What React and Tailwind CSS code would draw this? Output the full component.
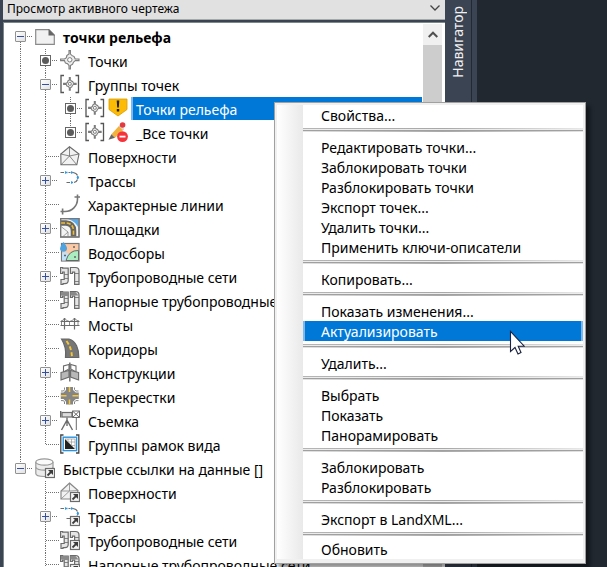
import React from "react";

const G = "#6b6b6b";

function Svg({ children }) {
  return (
    <svg viewBox="0 0 20 21" className="h-[21px] w-5 shrink-0" fill="none" stroke={G} strokeWidth="1.2" aria-hidden="true">
      {children}
    </svg>
  );
}

const Shortcut = () => (
  <g>
    <rect x="10.5" y="10.5" width="9" height="9" fill="#f4f4f4" stroke="#6b6b6b" />
    <path d="M12.5 17.5 L16.5 13.5" stroke="#3c3c3c" strokeWidth="1.8" />
    <path d="M13 12 H18 V17 Z" fill="#3c3c3c" stroke="none" />
  </g>
);

const Pipes = ({ dark }) => (
  <g>
    <path d="M.6 1.5 H2.6 V2.2 H8.2 V14.5 Q8.2 17.6 5 17.6 H3 V18.5 H1 V13.5 H4.2 V6 H2.6 V7.5 H.6 Z" fill="#e6e6e6" />
    <path d="M10.4 1.5 H15.5 Q19 1.5 19 5 V18.4 H14.6 V6.2 H12.4 V7.5 H10.4 Z" fill="#e6e6e6" />
    {dark && <path d="M1 2 H8 V6 H4 V5.5 H1 Z M10.4 2 H15.5 L18.5 5.5 H10.4 Z" fill="#8a8a8a" stroke="none" />}
    <path d="M4.2 8.5 H8.2 M4.2 12.5 H8.2 M14.6 7.5 H19 M14.6 15.5 H19" strokeWidth=".8" />
  </g>
);

const Surface = () => (
  <g strokeWidth="1.1">
    <path d="M9.5 .8 L19 8 L16.8 18.8 H1 L.8 8 Z" fill="#f2f2f2" />
    <path d="M9.5 .8 V10 L19 8 M9.5 10 L16.8 18.8 M9.5 10 L1 18.8 M9.5 10 L.8 8" strokeWidth=".8" />
  </g>
);

const Alignment = () => (
  <g strokeWidth="1.2">
    <path d="M.5 2.5 H4 M8.5 2.5 H10.5 M13 2.5 C15.5 3 17 4 17.5 5.5 M17.5 9.5 C17 11 16 12 14 12.5 M6.5 12.5 H10" />
    <path d="M5 2.5 H7.5 M11 2.5 H13 M17.8 6 V9 M11 12.5 H13" stroke="#2b9be6" strokeWidth="1.6" />
    <path d="M5.5 1.2 V3.8 M11.5 1.2 V3.8 M16.6 7.5 H19 M11.5 11.2 V13.8" stroke="#2b9be6" strokeWidth=".8" />
  </g>
);

const Point = ({ s }) => (
  <g transform={s ? "translate(3.2 3.2) scale(.68)" : undefined}>
    <path
      d="M9 .6 H10.4 V4 Q12 6 14 6.5 L15.2 9 H19 V10.6 H15.2 Q13 12 12.6 14.2 L10.4 15.5 V19 H9 V15.5 Q8 13.2 5.4 13 L4.4 10.6 H.6 V9 H4.4 Q7 8 6.8 5.6 L9 4 Z"
      fill="#ededed"
      stroke="#7c7c7c"
      strokeWidth={s ? 1.6 : 1.1}
    />
    <circle cx="9.8" cy="9.8" r="2.2" fill="#fff" stroke="#7c7c7c" strokeWidth={s ? 1.4 : 1} />
  </g>
);

const ICONS = {
  drawing: (
    <g>
      <path d="M.7 3.6 H14 L19.3 9 V18.3 H.7 Z" fill="#f1f1f1" stroke="#8a8a8a" />
      <path d="M13.5 3 L20 9.5 H13.5 Z" fill="#666" stroke="none" />
    </g>
  ),
  point: <Point />,
  group: (
    <g>
      <path d="M4 1.5 H1 V18.5 H4 M15.5 1.5 H18.5 V18.5 H15.5" stroke="#555" strokeWidth="1.3" />
      <Point s />
    </g>
  ),
  warn: (
    <g stroke="none">
      <path d="M1 1 H19 V11.5 L10 18 L1 11.5 Z" fill="#fdbb05" stroke="#d99a00" strokeWidth=".8" />
      <path d="M8.7 2.5 H11.3 L10.8 9.5 H9.2 Z M8.8 11 H11.2 V13.4 H8.8 Z" fill="#222" />
    </g>
  ),
  pencil: (
    <g stroke="none">
      <path d="M11.4 3.4 L15.8 7.6 L7 15.8 L3.4 12.2 Z" fill="#f2b23e" />
      <path d="M12.6 2.6 L16.2 6.2 L14.8 8 L11 4.4 Z" fill="#d8d8d8" />
      <circle cx="14.6" cy="3" r="2.8" fill="#e53940" />
      <path d="M3.4 12.2 L7 15.8 L.5 17.8 Z" fill="#666" />
      <circle cx="14.5" cy="14.6" r="5.4" fill="#f5333b" />
      <rect x="11.5" y="13.7" width="6" height="1.8" fill="#fff" />
    </g>
  ),
  surface: <Surface />,
  alignment: <Alignment />,
  feature: (
    <g stroke="#777" strokeWidth="1.6">
      <path d="M.5 17.5 H5 C12 17.5 17.5 12 17.5 5 V.5" />
      <path d="M2.6 14.5 V20.5 M14.5 3 H20" />
    </g>
  ),
  site: (
    <g>
      <rect x=".6" y=".6" width="18.4" height="18.4" fill="#f4f4f4" />
      <path d="M8 1 H18.6 V11 Q17 4 8 1 Z" fill="#5aa9e8" stroke="none" />
      <path d="M1 5 H6 Q13.5 5.5 13.5 13 V18.5" stroke="#666" strokeWidth="5.6" />
      <path d="M1 5 H6 Q13.5 5.5 13.5 13 V18.5" stroke="#f5bd2c" strokeWidth="1.6" strokeDasharray="4 1.6" />
      <path d="M1 8.5 L8 14 V18.5 M8 14 L3 18.5" strokeWidth=".8" stroke="#888" />
      <rect x=".6" y=".6" width="18.4" height="18.4" stroke="#777" />
    </g>
  ),
  catchment: (
    <g>
      <rect x="1.5" y="1.5" width="17.5" height="17.5" fill="#fbc9a5" stroke="#777" />
      <path d="M2 11 Q7 9 9 13 V18.5 H2 Z" fill="#bfe1fa" stroke="none" />
      <path d="M6 18.5 Q9 8 18.5 8.5 V18.5 Z" fill="#a9edc1" stroke="#666" strokeWidth="1" />
      <path d="M3.5 0 Q7.5 5 7 7 A3.6 3.6 0 0 1 0 7 Q0 4.5 3.5 0 Z" fill="#4fa3e0" stroke="none" />
      <path d="M13 5 H15 M4 13.5 H6 M14 15 H16" strokeWidth="1.6" stroke="#666" />
    </g>
  ),
  pipes: <Pipes />,
  pressure: <Pipes dark />,
  bridge: (
    <g strokeWidth="1.2">
      <path d="M.5 7.5 H19.5 M.5 11.5 H19.5 M4.5 4 V15.5 M14.5 4 V15.5" />
      <path d="M1 7 Q4 6.5 4.5 4 Q6 7 9.5 7.5 Q13 7 14.5 4 Q15.5 6.5 19 7 M1.5 7 V12 M9.5 7 V12 M18 7 V12" strokeWidth=".8" />
    </g>
  ),
  corridor: (
    <g>
      <path d="M1.5 1 H9 C16 3 19 11 18.8 19.5 H5.5 C6.5 11 4 5 1.5 1 Z" fill="#777" stroke="#666" />
      <path d="M6.5 3 C10 8 11.5 12 12 19" stroke="#f7c632" strokeWidth="1.9" strokeDasharray="4 2.2" />
    </g>
  ),
  assembly: (
    <g strokeWidth="1.1">
      <path d="M3.5 10 V4 L9 2.5 V7 L3.5 10 M16 10 V4 L10.8 2.5 V7 L16 10" fill="#fff" />
      <path d="M1 10.5 L9 8.5 V15 L1 18 Z M18.6 10.5 L10.6 8.5 V15 L18.6 18 Z" fill="#b8b8b8" />
      <path d="M9.8 .5 V19.5" strokeWidth="1.4" />
    </g>
  ),
  intersection: (
    <g>
      <path d="M6 1 H13 V4 L15.8 6.5 H18.8 V13 H15.8 L13 15.8 V18.6 H6 V15.8 L3.5 13 H.8 V6.5 H3.5 L6 4 Z" fill="#858585" stroke="none" />
      <path d="M4.5 1.5 V3.5 L3.5 5 H1 M14.5 1.5 V3.5 L15.8 5 H18.5 M4.5 18 V16 L3.5 14.6 H1 M14.5 18 V16 L15.8 14.6 H18.5" stroke="#777" strokeWidth=".9" />
      <path d="M9.5 1 V6 M9.5 13.5 V18.6 M1 9.8 H6.5 M12.5 9.8 H18.6" stroke="#f9c838" strokeWidth="1.5" />
    </g>
  ),
  survey: (
    <g>
      <rect x="2" y="2.5" width="10" height="4.5" fill="#ddd" />
      <path d="M.7 1 V7.5 M7 7.5 V11 M7 10 L1.5 20 M7 10 L12.5 20 M7 10 V16" strokeWidth="1.4" />
      <path d="M12.5 1 H19.5 V7.5 H12.5 Z M12.5 1 L19.5 7.5 M19.5 1 L12.5 7.5 M16.3 7 V20" strokeWidth="1" fill="#fff" />
    </g>
  ),
  frames: (
    <g>
      <path d="M3.5 1 H.8 V19 H3.5 M16 1 H18.8 V19 H16" stroke="#444" strokeWidth="1.3" />
      <rect x="3.2" y="3.2" width="13.4" height="13.4" stroke="#2b93e0" fill="#fff" strokeWidth="1.4" />
      <path d="M5 5 L15 15 H5 Z" fill="#222" stroke="none" />
      <path d="M8 5 V8 M11.5 5 V11 M8 8 H15 M11.5 11.5 H15 M5 5 H15 V15" strokeWidth=".7" stroke="#999" />
    </g>
  ),
  database: (
    <g>
      <path d="M.8 4 V15.5 C.8 19.5 18 19.5 18 15.5 V4" fill="#ececec" stroke="#999" />
      <ellipse cx="9.4" cy="4" rx="8.6" ry="3.2" fill="#fafafa" stroke="#999" />
      <path d="M.8 9.5 C3 13 16 13 18 9.5" stroke="#999" />
      <Shortcut />
    </g>
  ),
  surfaceLink: (
    <g>
      <path d="M9.5 1 L18 8.5 L16 17 H1 V9 Z" fill="#f2f2f2" stroke="#888" />
      <path d="M9.5 1 V9 L1 9 M9.5 9 L1 17 M9.5 9 L18 8.5" strokeWidth=".8" stroke="#888" />
      <Shortcut />
    </g>
  ),
  alignmentLink: <g><Alignment /><Shortcut /></g>,
  pipesLink: <g><Pipes /><Shortcut /></g>,
  pressureLink: <g><Pipes dark /><Shortcut /></g>,
};

const V = "bg-[repeating-linear-gradient(to_bottom,#707070_0_1px,transparent_1px_2px)]";
const H = "bg-[repeating-linear-gradient(to_right,#707070_0_1px,transparent_1px_2px)]";

function Line({ on }) {
  return <span className={"w-px grow " + (on ? V : "")} />;
}

/* One 25px tree column: a vertical guide with an optional node box and a stub to the right. */
function Cell({ kind, up, down }) {
  return (
    <span className="flex h-6 w-[25px] shrink-0">
      <span className="flex w-[11px] flex-col items-center">
        <span className="flex h-1.5 flex-col"><Line on={up} /></span>
        {kind === "plus" || kind === "minus" || kind === "dot" ? (
          <button
            type="button"
            aria-label={kind === "minus" ? "Свернуть" : "Развернуть"}
            className={
              "flex h-[11px] w-[11px] items-center justify-center border " +
              (kind === "dot" ? "border-[#666] bg-white" : "rounded-[1px] border-[#929292] bg-gradient-to-br from-white to-[#e2e2e2]")
            }
          >
            {kind === "dot" ? (
              <span className="h-[7px] w-[7px] rounded-full bg-[#5c5c5c]" />
            ) : (
              <svg viewBox="0 0 7 7" className="h-[7px] w-[7px]" stroke="#3550a0" aria-hidden="true">
                <path d={kind === "plus" ? "M0 3.5 H7 M3.5 0 V7" : "M0 3.5 H7"} />
              </svg>
            )}
          </button>
        ) : (
          <span className="flex h-[11px] flex-col">
            <span className="flex h-1.5 flex-col"><Line on={up} /></span>
            <span className="flex h-[5px] flex-col"><Line on={down} /></span>
          </span>
        )}
        <span className="flex grow flex-col"><Line on={down} /></span>
      </span>
      {kind !== "none" && (
        <span className={"mt-[11px] h-px " + H + (kind === "leaf" ? " -ml-[5px] w-[13px]" : " ml-px w-[6px]")} />
      )}
    </span>
  );
}

const ROWS = [
  { lv: 0, kind: "minus", icon: "drawing", text: "точки рельефа", bold: true, up: false, down: true },
  { lv: 1, kind: "dot", icon: "point", text: "Точки", up: true, down: true },
  { lv: 1, kind: "minus", icon: "group", text: "Группы точек", up: true, down: true },
  { lv: 2, kind: "dot", icon: "group", icon2: "warn", text: "Точки рельефа", sel: true, up: true, down: true },
  { lv: 2, kind: "dot", icon: "group", icon2: "pencil", text: "_Все точки", up: true, down: false },
  { lv: 1, kind: "leaf", icon: "surface", text: "Поверхности", up: true, down: true },
  { lv: 1, kind: "plus", icon: "alignment", text: "Трассы", up: true, down: true },
  { lv: 1, kind: "leaf", icon: "feature", text: "Характерные линии", up: true, down: true },
  { lv: 1, kind: "plus", icon: "site", text: "Площадки", up: true, down: true },
  { lv: 1, kind: "leaf", icon: "catchment", text: "Водосборы", up: true, down: true },
  { lv: 1, kind: "plus", icon: "pipes", text: "Трубопроводные сети", up: true, down: true },
  { lv: 1, kind: "leaf", icon: "pressure", text: "Напорные трубопроводные сети", up: true, down: true },
  { lv: 1, kind: "leaf", icon: "bridge", text: "Мосты", up: true, down: true },
  { lv: 1, kind: "leaf", icon: "corridor", text: "Коридоры", up: true, down: true },
  { lv: 1, kind: "plus", icon: "assembly", text: "Конструкции", up: true, down: true },
  { lv: 1, kind: "leaf", icon: "intersection", text: "Перекрестки", up: true, down: true },
  { lv: 1, kind: "plus", icon: "survey", text: "Съемка", up: true, down: true },
  { lv: 1, kind: "leaf", icon: "frames", text: "Группы рамок вида", up: true, down: false },
  { lv: 0, kind: "minus", icon: "database", text: "Быстрые ссылки на данные []", up: true, down: false },
  { lv: 1, kind: "leaf", icon: "surfaceLink", text: "Поверхности", up: true, down: true, last: true },
  { lv: 1, kind: "plus", icon: "alignmentLink", text: "Трассы", up: true, down: true, last: true },
  { lv: 1, kind: "leaf", icon: "pipesLink", text: "Трубопроводные сети", up: true, down: true, last: true },
  { lv: 1, kind: "leaf", icon: "pressureLink", text: "Напорные трубопроводные сети", up: true, down: true, last: true },
];

function Row({ r }) {
  return (
    <li className="flex h-6 whitespace-nowrap">
      {r.lv > 0 && <Cell kind="none" up={!r.last} down={!r.last} />}
      {r.lv > 1 && <Cell kind="none" up down />}
      <Cell kind={r.kind} up={r.up} down={r.down} />
      <span className="-ml-[5px] flex pt-px">
        <Svg>{ICONS[r.icon]}</Svg>
        {r.icon2 && <span className="ml-[3px] flex"><Svg>{ICONS[r.icon2]}</Svg></span>}
      </span>
      <span
        className={
          "leading-[26px] " +
          (r.sel ? "ml-[3px] h-[23px] grow border-l-2 border-[#7db8ec] bg-[#0078d7] pl-[3px] text-white" : "ml-2 h-6") +
          (r.bold ? " font-bold" : "")
        }
      >
        {r.text}
      </span>
    </li>
  );
}

const MENU = [
  ["Свойства..."],
  ["Редактировать точки...", "Заблокировать точки", "Разблокировать точки", "Экспорт точек...", "Удалить точки...", "Применить ключи-описатели"],
  ["Копировать..."],
  ["Показать изменения...", "Актуализировать"],
  ["Удалить..."],
  ["Выбрать", "Показать", "Панорамировать"],
  ["Заблокировать", "Разблокировать"],
  ["Экспорт в LandXML..."],
  ["Обновить"],
];

function Separator({ tight }) {
  return (
    <div role="separator" className={"flex flex-col pt-[3px] " + (tight ? "h-2.5" : "h-3")}>
      <span className="h-px bg-gradient-to-r from-[#b5b5b5] via-[#a8a8a8] to-[#e8e8e8]" />
      <span className="h-px bg-[#ececec]" />
      <span className="h-px bg-[#a0a0a0]" />
      <span className="h-px bg-gradient-to-r from-[#e4e4e4] via-[#a8a8a8] to-[#e4e4e4]" />
    </div>
  );
}

function ContextMenu() {
  return (
    <div role="menu" className="absolute left-[274px] top-[102px] w-[312px] border border-[#a0a0a0] bg-[#f0f0f0] p-0.5 pb-1 shadow-[4px_4px_4px_rgba(0,0,0,0.45)]">
      <div className="flex">
        <div className="w-[26px] shrink-0 bg-gradient-to-r from-white to-[#e9e9e9]" />
        <div className="grow bg-white">
          {MENU.map((group, i) => (
            <React.Fragment key={i}>
              {i > 0 && <Separator tight={i === MENU.length - 1} />}
              {group.map((t) => (
                <button
                  key={t}
                  type="button"
                  role="menuitem"
                  className={
                    "block h-5 w-full whitespace-nowrap text-left leading-[22px] " +
                    (t === "Актуализировать" ? "border-x-2 border-[#7db8ec] bg-[#0078d7] pl-4 text-white" : "pl-[18px] text-black")
                  }
                >
                  {t}
                </button>
              ))}
            </React.Fragment>
          ))}
        </div>
      </div>
    </div>
  );
}

export default function App() {
  return (
    <div className="relative flex h-screen overflow-hidden bg-[#212830] font-['Noto_Sans','Segoe_UI',sans-serif] text-[14px] text-black">
      <div className="flex w-[445px] shrink-0 flex-col bg-[#3b4453] pl-[3px]">
        <div className="relative flex h-5 shrink-0 border-b border-[#a5a9a8] bg-[#e1e1e1]">
          <select aria-label="Вид" className="h-[18px] w-full appearance-none bg-transparent pl-1 text-[12px] leading-[18px]">
            <option>Просмотр активного чертежа</option>
          </select>
          <svg viewBox="0 0 10 6" className="absolute right-[5px] top-[5px] h-1.5 w-2.5" fill="none" stroke="#444" strokeWidth="1.3" aria-hidden="true">
            <path d="M.5 .5 L5 5 L9.5 .5" />
          </svg>
        </div>
        <div className="mt-0.5 flex min-h-0 grow overflow-hidden border-l border-t border-[#7d8889] bg-white">
          <ul className="min-w-0 grow overflow-hidden pl-[11px] pt-0.5" role="tree">
            {ROWS.map((r, i) => <Row key={i} r={r} />)}
          </ul>
          <div className="ml-px mr-[3px] mt-px flex w-[19px] shrink-0 flex-col bg-[#cdcdcd]">
            <button type="button" aria-label="Вверх" className="flex h-[21px] items-center justify-center bg-[#f0f0f0]">
              <svg viewBox="0 0 10 7" className="h-[7px] w-2.5" fill="none" stroke="#505050" strokeWidth="2" aria-hidden="true">
                <path d="M.7 6 L5 1.7 L9.3 6" />
              </svg>
            </button>
          </div>
        </div>
      </div>
      <div className="flex w-[27px] shrink-0 flex-col items-center border-r border-[#222933] bg-[#3b4453] pt-1.5">
        <span className="rotate-180 text-[14px] leading-[26px] text-[#f0f0f0] [writing-mode:vertical-rl]">Навигатор</span>
      </div>
      <div className="w-[5px] shrink-0 bg-[#3b4453]" />
      <ContextMenu />
      <svg viewBox="0 0 16 25" className="absolute left-[509px] top-[330px] h-[25px] w-4" aria-hidden="true">
        <path d="M1.5 1.5 V21.5 L6 17.5 L9 24 L12 22.6 L9.2 16.2 H15.2 Z" fill="#fff" stroke="#1c2340" strokeWidth="1.1" />
      </svg>
    </div>
  );
}
